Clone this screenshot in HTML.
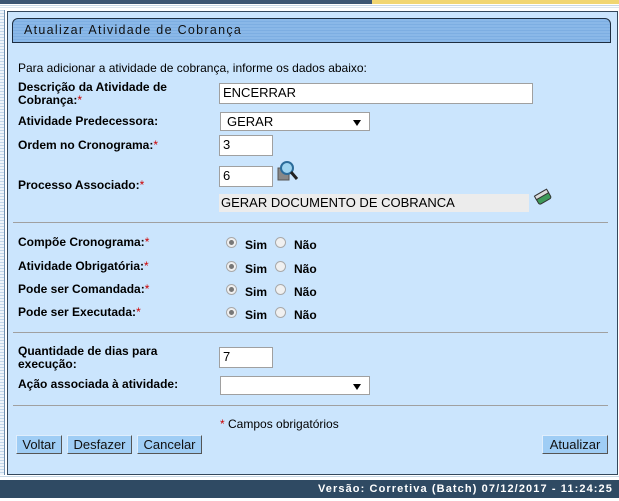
<!DOCTYPE html>
<html><head><meta charset="utf-8">
<style>
*{margin:0;padding:0;box-sizing:border-box}
body{width:619px;height:501px;background:#fff;position:relative;overflow:hidden;font-family:"Liberation Sans",Arial,sans-serif;font-size:12px;color:#000}
.a{position:absolute}
.lbl{position:absolute;left:18px;font-weight:bold;font-size:12px;line-height:13px}
.req{color:#c00;font-weight:normal}
.inp{position:absolute;background:#fff;border:1px solid #a0a0a0;font-size:13px;padding-left:3px;line-height:18px;height:21px}
.sel{position:absolute;background:#fff;border:1px solid #a0a0a0;font-size:13px;padding-left:6px;line-height:17px;height:19px}
.sel:after{content:"";position:absolute;right:8px;top:7px;border-left:4px solid transparent;border-right:4px solid transparent;border-top:6px solid #000}
.hr{position:absolute;left:13px;width:595px;height:1px;background:#a0a0a0}
.rad{position:absolute;width:11px;height:11px;border-radius:50%;border:1px solid #a9a9a9;background:#f0f0f0}
.rad.on:after{content:"";position:absolute;left:2px;top:2px;width:5px;height:5px;border-radius:50%;background:#777}
.rt{position:absolute;font-weight:bold;font-size:12px}
.btn{position:absolute;top:435px;height:19px;background:#9fcdf5;border:1px solid #555;border-top-color:#e0eefc;border-left-color:#e0eefc;font-size:13px;line-height:17px;text-align:center;color:#111}
</style></head><body>
<div class="a" style="left:0;top:0;width:619px;height:4px;background:#3c5673"></div>
<div class="a" style="left:372px;top:0;width:247px;height:4px;background:#f1d672"></div>
<div class="a" style="left:0;top:5px;width:619px;height:1px;background:#c8d8e6"></div>
<div class="a" style="left:0;top:7px;width:619px;height:1px;background:#dde7f0"></div>
<div class="a" style="left:0;top:10px;width:5px;height:465px;background:repeating-linear-gradient(#c2d6ea 0 1px,#eef4fa 1px 3px);border-right:1px solid #7090b0"></div>
<div class="a" style="left:7px;top:11px;width:611px;height:464px;background:#cbe5fd;border:1px solid #34485c"></div>
<div class="a" style="left:12px;top:18px;width:599px;height:25px;background:repeating-linear-gradient(#8ab8e8 0 2px,#7daee2 2px 3px);border:1px solid #1e2e40;border-radius:6px 6px 0 0"></div>
<div class="a" style="left:24px;top:23px;font-size:12.5px;letter-spacing:1.3px;color:#111">Atualizar Atividade de Cobrança</div>

<div class="a" style="left:18px;top:61px;font-size:12px">Para adicionar a atividade de cobrança, informe os dados abaixo:</div>
<div class="lbl" style="top:81px">Descrição da Atividade de<br>Cobrança:<span class="req">*</span></div>
<div class="inp" style="left:219px;top:83px;width:314px">ENCERRAR</div>
<div class="lbl" style="top:115px">Atividade Predecessora:</div>
<div class="sel" style="left:220px;top:112px;width:150px">GERAR</div>
<div class="lbl" style="top:139px">Ordem no Cronograma:<span class="req">*</span></div>
<div class="inp" style="left:219px;top:135px;width:54px">3</div>
<div class="lbl" style="top:179px">Processo Associado:<span class="req">*</span></div>
<div class="inp" style="left:219px;top:166px;width:54px">6</div>
<svg class="a" style="left:277px;top:160px" width="24" height="24" viewBox="0 0 24 24"><rect x="1" y="8" width="11" height="12" fill="#888" stroke="#555"/><circle cx="10" cy="8" r="6" fill="#9fd4f0" stroke="#2c6c9a" stroke-width="2"/><line x1="14" y1="12" x2="20" y2="19" stroke="#222" stroke-width="3"/></svg>
<div class="a" style="left:219px;top:194px;width:310px;height:18px;background:#ececec;font-size:13px;line-height:18px;padding-left:2px">GERAR DOCUMENTO DE COBRANCA</div>
<svg class="a" style="left:533px;top:187px" width="20" height="20" viewBox="0 0 20 20"><g transform="rotate(-30 10 10)"><rect x="3" y="5" width="14" height="10" rx="2" fill="#3e9a5a" stroke="#333"/><rect x="3" y="5" width="14" height="4" fill="#ddd" stroke="#333"/></g></svg>

<div class="hr" style="top:222px"></div>
<div class="lbl" style="top:236px">Compõe Cronograma:<span class="req">*</span></div>
<div class="lbl" style="top:260px">Atividade Obrigatória:<span class="req">*</span></div>
<div class="lbl" style="top:283px">Pode ser Comandada:<span class="req">*</span></div>
<div class="lbl" style="top:306px">Pode ser Executada:<span class="req">*</span></div>
<div class="rad on" style="left:226px;top:237px"></div><div class="rt" style="left:245px;top:238px">Sim</div><div class="rad" style="left:275px;top:237px"></div><div class="rt" style="left:294px;top:238px">Não</div>
<div class="rad on" style="left:226px;top:261px"></div><div class="rt" style="left:245px;top:262px">Sim</div><div class="rad" style="left:275px;top:261px"></div><div class="rt" style="left:294px;top:262px">Não</div>
<div class="rad on" style="left:226px;top:284px"></div><div class="rt" style="left:245px;top:285px">Sim</div><div class="rad" style="left:275px;top:284px"></div><div class="rt" style="left:294px;top:285px">Não</div>
<div class="rad on" style="left:226px;top:307px"></div><div class="rt" style="left:245px;top:308px">Sim</div><div class="rad" style="left:275px;top:307px"></div><div class="rt" style="left:294px;top:308px">Não</div>

<div class="hr" style="top:332px"></div>
<div class="lbl" style="top:345px">Quantidade de dias para<br>execução:</div>
<div class="inp" style="left:219px;top:347px;width:54px">7</div>
<div class="lbl" style="top:378px">Ação associada à atividade:</div>
<div class="sel" style="left:220px;top:376px;width:150px"></div>
<div class="hr" style="top:405px"></div>
<div class="a" style="left:220px;top:417px;font-size:12px"><span style="color:#c00">*</span> Campos obrigatórios</div>

<div class="btn" style="left:16px;width:46px">Voltar</div>
<div class="btn" style="left:67px;width:65px">Desfazer</div>
<div class="btn" style="left:137px;width:65px">Cancelar</div>
<div class="btn" style="left:542px;width:66px">Atualizar</div>

<div class="a" style="left:0;top:476px;width:619px;height:1px;background:#c8d8e6"></div>
<div class="a" style="left:0;top:480px;width:619px;height:18px;background:#2f4a63;color:#fff;font-weight:bold;font-size:11px;letter-spacing:1.1px;text-align:right;padding-right:6px;line-height:18px">Versão: Corretiva (Batch) 07/12/2017 - 11:24:25</div>
</body></html>
